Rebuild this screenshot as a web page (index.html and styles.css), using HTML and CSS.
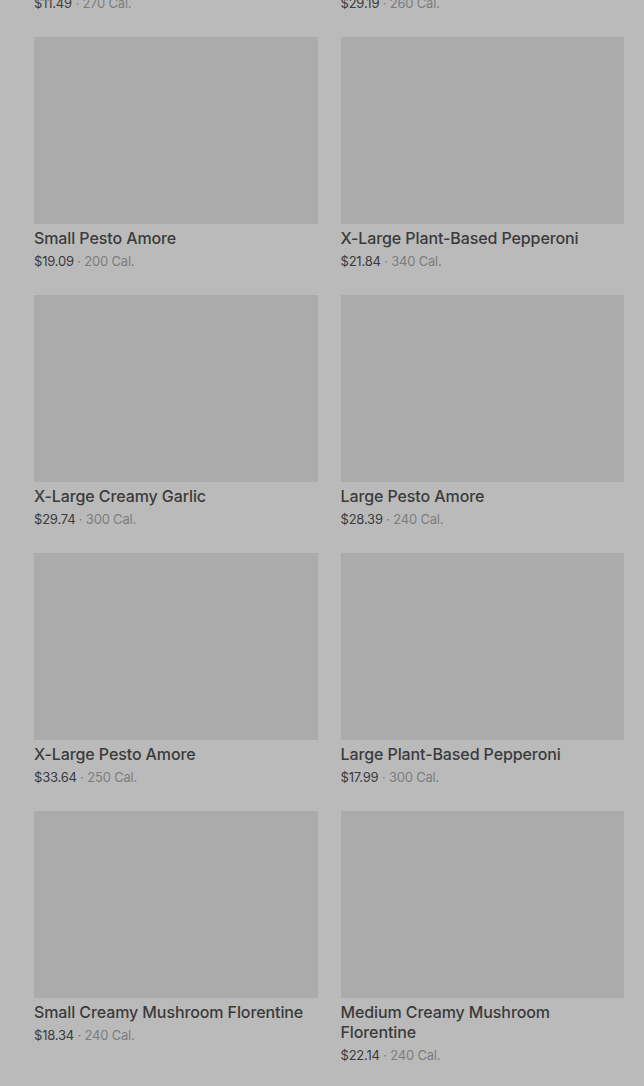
FILE: index.html
```html
<!DOCTYPE html>
<html>

<head>
    <title>Menu</title>
    <link rel="stylesheet" href="styles.css">
</head>

<body>
    <div class="menu">
        <div class="item">
            <div class="photo"></div>
            <div class="name">Medium Pesto Amore</div>
            <div class="meta"><span class="price">$11.49</span> · 270 Cal.</div>
        </div>
        <div class="item">
            <div class="photo"></div>
            <div class="name">Medium Plant-Based Pepperoni</div>
            <div class="meta"><span class="price">$29.19</span> · 260 Cal.</div>
        </div>

        <div class="item">
            <div class="photo"></div>
            <div class="name">Small Pesto Amore</div>
            <div class="meta"><span class="price">$19.09</span> · 200 Cal.</div>
        </div>
        <div class="item">
            <div class="photo"></div>
            <div class="name">X-Large Plant-Based Pepperoni</div>
            <div class="meta"><span class="price">$21.84</span> · 340 Cal.</div>
        </div>

        <div class="item">
            <div class="photo"></div>
            <div class="name">X-Large Creamy Garlic</div>
            <div class="meta"><span class="price">$29.74</span> · 300 Cal.</div>
        </div>
        <div class="item">
            <div class="photo"></div>
            <div class="name">Large Pesto Amore</div>
            <div class="meta"><span class="price">$28.39</span> · 240 Cal.</div>
        </div>

        <div class="item">
            <div class="photo"></div>
            <div class="name">X-Large Pesto Amore</div>
            <div class="meta"><span class="price">$33.64</span> · 250 Cal.</div>
        </div>
        <div class="item">
            <div class="photo"></div>
            <div class="name">Large Plant-Based Pepperoni</div>
            <div class="meta"><span class="price">$17.99</span> · 300 Cal.</div>
        </div>

        <div class="item">
            <div class="photo"></div>
            <div class="name">Small Creamy Mushroom Florentine</div>
            <div class="meta"><span class="price">$18.34</span> · 240 Cal.</div>
        </div>
        <div class="item">
            <div class="photo"></div>
            <div class="name">Medium Creamy Mushroom Florentine</div>
            <div class="meta"><span class="price">$22.14</span> · 240 Cal.</div>
        </div>
    </div>
</body>

</html>
```

FILE: styles.css
```css
html,
body {
    margin: 0;
    background-color: #bababa;
    font-family: Inter, "Noto Sans", sans-serif;
}

/* list is scrolled, first row sits above the top */
.menu {
    display: grid;
    grid-template-columns: 1fr 1fr;
    column-gap: 23px;
    row-gap: 24px;
    margin-top: -221px;
    padding: 0 20px 40px 34px;
}

.photo {
    height: 187px;
    background-color: #ababab;
    margin-bottom: 4px;
}

.name {
    font-size: 16px;
    font-weight: 500;
    line-height: 20px;
    letter-spacing: -0.1px;
    color: #3b3b3b;
}

.meta {
    margin-top: 3px;
    font-size: 13px;
    line-height: 20px;
    letter-spacing: -0.2px;
    color: #7d7d7d;
}

.price {
    color: #3b3b3b;
}
```
